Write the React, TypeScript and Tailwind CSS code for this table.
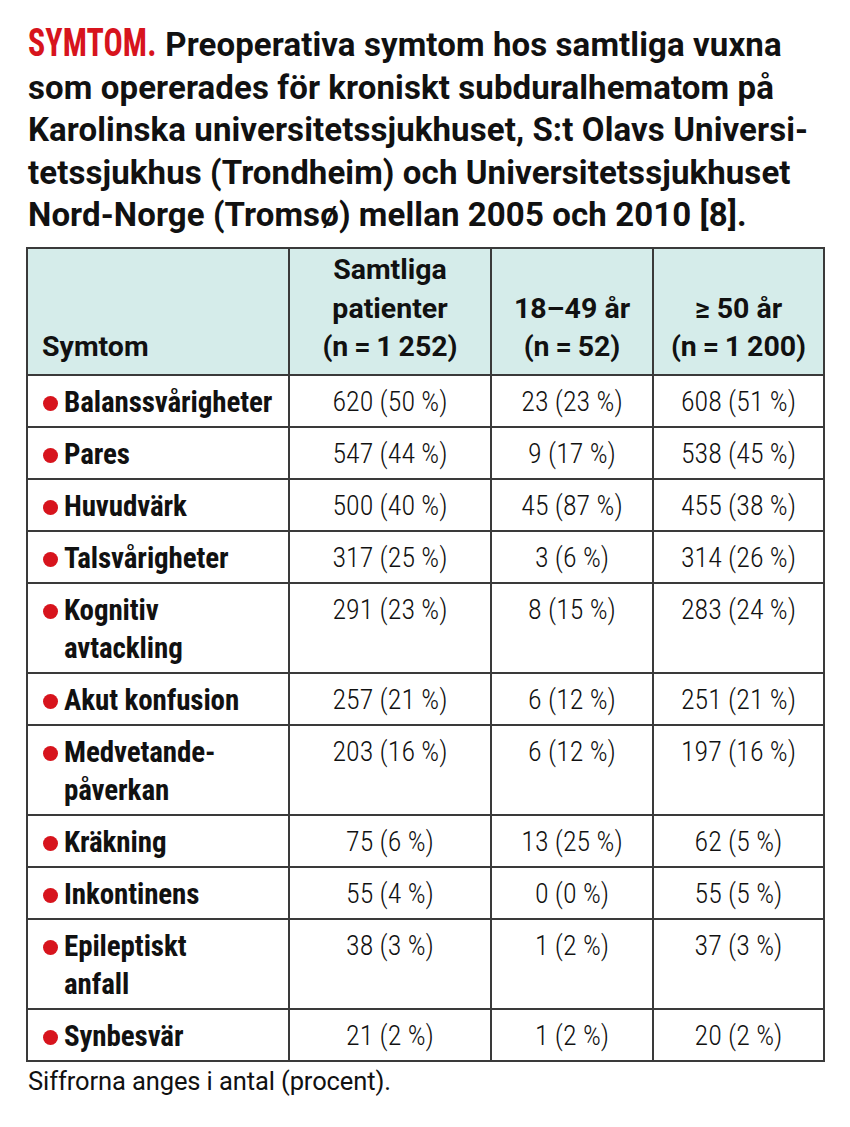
import React from "react";

const rows: { label: string[]; a: string; b: string; c: string; tall?: boolean }[] = [
  { label: ["Balanssvårigheter"], a: "620 (50 %)", b: "23 (23 %)", c: "608 (51 %)" },
  { label: ["Pares"], a: "547 (44 %)", b: "9 (17 %)", c: "538 (45 %)" },
  { label: ["Huvudvärk"], a: "500 (40 %)", b: "45 (87 %)", c: "455 (38 %)" },
  { label: ["Talsvårigheter"], a: "317 (25 %)", b: "3 (6 %)", c: "314 (26 %)" },
  { label: ["Kognitiv", "avtackling"], a: "291 (23 %)", b: "8 (15 %)", c: "283 (24 %)", tall: true },
  { label: ["Akut konfusion"], a: "257 (21 %)", b: "6 (12 %)", c: "251 (21 %)" },
  { label: ["Medvetande-", "påverkan"], a: "203 (16 %)", b: "6 (12 %)", c: "197 (16 %)", tall: true },
  { label: ["Kräkning"], a: "75 (6 %)", b: "13 (25 %)", c: "62 (5 %)" },
  { label: ["Inkontinens"], a: "55 (4 %)", b: "0 (0 %)", c: "55 (5 %)" },
  { label: ["Epileptiskt", "anfall"], a: "38 (3 %)", b: "1 (2 %)", c: "37 (3 %)", tall: true },
  { label: ["Synbesvär"], a: "21 (2 %)", b: "1 (2 %)", c: "20 (2 %)" },
];

const cell = "border-2 border-[#3a3a3a]";

export default function App() {
  return (
    <div className="w-[850px] h-[1127px] bg-white text-[#111] pt-[24px] pl-[28px] font-['Roboto',sans-serif]">
      <h1 className="font-bold text-[33px] leading-[42.5px] tracking-[0.1px]">
        <span className="inline-block origin-left scale-x-[0.84] -mr-[24px] font-stretch-condensed text-[#d7141d] text-[38px] leading-none">SYMTOM.</span> Preoperativa symtom hos samtliga vuxna
        <br />
        som opererades för kroniskt subduralhematom på
        <br />
        Karolinska universitetssjukhuset, S:t Olavs Universi-
        <br />
        tetssjukhus (Trondheim) och Universitetssjukhuset
        <br />
        Nord-Norge (Tromsø) mellan 2005 och 2010 [8].
      </h1>
      <table className="mt-[10px] -ml-[2px] border-collapse w-[797px] table-fixed">
        <colgroup>
          <col className="w-[262px]" />
          <col className="w-[202px]" />
          <col className="w-[162px]" />
          <col className="w-[171px]" />
        </colgroup>
        <thead>
          <tr className="bg-[#d5ecea] h-[127px] text-[28.5px] leading-[38.5px]">
            <th className={`${cell} text-left align-bottom pl-[14px] pb-[7px] font-bold`}>Symtom</th>
            <th className={`${cell} text-center align-bottom pb-[7px] font-bold`}>
              Samtliga
              <br />
              patienter
              <br />
              (n{"\u2009"}={"\u2009"}1{"\u2009"}252)
            </th>
            <th className={`${cell} text-center align-bottom pb-[7px] font-bold`}>
              18–49 år
              <br />
              (n{"\u2009"}={"\u2009"}52)
            </th>
            <th className={`${cell} text-center align-bottom pb-[7px] font-bold`}>
              ≥ 50 år
              <br />
              (n{"\u2009"}={"\u2009"}1{"\u2009"}200)
            </th>
          </tr>
        </thead>
        <tbody className="font-stretch-condensed text-[28px] leading-[38px]">
          {rows.map((r, i) => (
            <tr key={i} className={r.tall ? "h-[90px]" : "h-[52px]"}>
              <td className={`${cell} align-top pt-[7px] pl-[15px]`}>
                <div className="flex items-start">
                  <span className="w-[15px] h-[15px] rounded-full bg-[#d7141d] mt-[13px] mr-[6px] shrink-0" />
                  <span className="font-bold text-[29px] tracking-[-0.1px]">
                    {r.label.map((l, j) => (
                      <div key={j}>{l}</div>
                    ))}
                  </span>
                </div>
              </td>
              <td className={`${cell} align-top pt-[7px] text-center font-light`}>{r.a}</td>
              <td className={`${cell} align-top pt-[7px] text-center font-light`}>{r.b}</td>
              <td className={`${cell} align-top pt-[7px] text-center font-light`}>{r.c}</td>
            </tr>
          ))}
        </tbody>
      </table>
      <p className="text-[25.5px] leading-[32px] mt-[3px] tracking-[-0.1px]">Siffrorna anges i antal (procent).</p>
    </div>
  );
}
